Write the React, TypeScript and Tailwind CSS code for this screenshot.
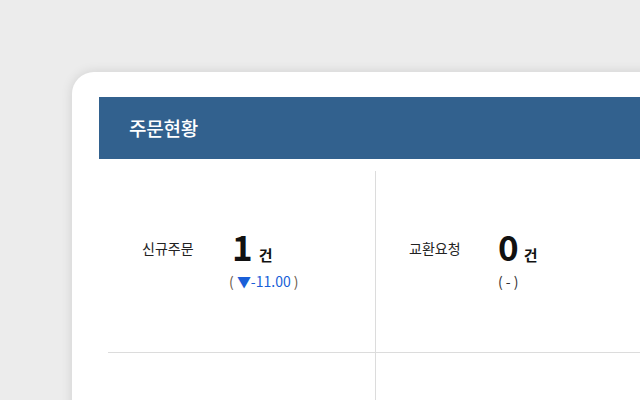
export default function App() {
  const font = { fontFamily: '"Noto Sans CJK KR", "Noto Sans", sans-serif' };
  return (
    <div className="w-[640px] h-[400px] overflow-hidden bg-[#ececec] pl-[72px] pt-[72px]" style={font}>
      <div className="w-[600px] h-[400px] bg-white rounded-tl-[22px] shadow-[0_0_12px_rgba(0,0,0,0.12)] pl-[27px] pt-[25px]">
        <div className="h-[62px] bg-[#32618e] flex items-center pl-[30px]">
          <span className="text-white text-[19px] font-medium tracking-[-0.2px]">주문현황</span>
        </div>
        <div className="ml-[9px] mt-[12px] grid grid-cols-[268px_268px]">
          <div className="h-[182px] border-r border-b border-[#dcdcdc] flex items-center pl-[34px] pb-[12px]">
            <div className="w-[90px] text-[14px] leading-[20px] text-[#222] -mt-[16px]">신규주문</div>
            <div className="flex flex-col">
              <div className="flex items-baseline">
                <span className="text-[35px] font-bold text-[#111] leading-[51px]">1</span>
                <span className="ml-[6px] text-[15px] font-bold text-[#111] leading-[22px]">건</span>
              </div>
              <div className="-ml-[3px] text-[14px] leading-[21px] text-[#1a5fd8] whitespace-pre">
                <span className="text-[#6b5a4a]">( </span>▼-11.00<span className="text-[#6b5a4a]"> )</span>
              </div>
            </div>
          </div>
          <div className="h-[182px] border-b border-[#dcdcdc] flex items-center pl-[33px] pb-[12px]">
            <div className="w-[89px] text-[14px] leading-[20px] text-[#222] -mt-[16px]">교환요청</div>
            <div className="flex flex-col">
              <div className="flex items-baseline">
                <span className="text-[35px] font-bold text-[#111] leading-[51px]">0</span>
                <span className="ml-[5px] text-[15px] font-bold text-[#111] leading-[22px]">건</span>
              </div>
              <div className="text-[14px] leading-[21px] text-[#333] whitespace-pre">( - )</div>
            </div>
          </div>
          <div className="h-[60px] border-r border-[#dcdcdc]"></div>
          <div className="h-[60px]"></div>
        </div>
      </div>
    </div>
  );
}
